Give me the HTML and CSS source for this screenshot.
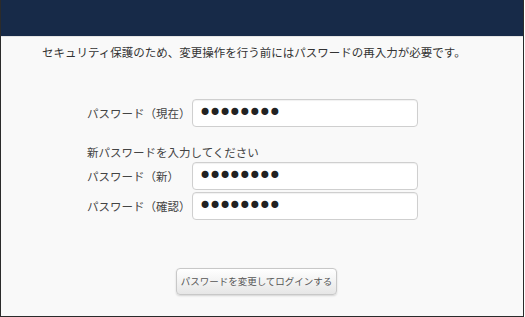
FILE: index.html
```html
<!DOCTYPE html>
<html lang="ja">
<head>
  <meta charset="UTF-8" />
  <title>パスワード変更</title>
  <link rel="stylesheet" href="styles.css">
</head>
<body>

<div class="ventana">
  <div class="cabecera"></div>
  <div class="contenido">
    <p class="aviso">セキュリティ保護のため、変更操作を行う前にはパスワードの再入力が必要です。</p>

    <form class="formulario" onsubmit="return false">
      <div class="fila fila-actual">
        <label for="actual">パスワード（現在）</label>
        <input type="password" id="actual" value="abcdefgh">
      </div>

      <div class="pista">新パスワードを入力してください</div>
      <div class="fila">
        <label for="nueva">パスワード（新）</label>
        <input type="password" id="nueva" value="abcdefgh">
      </div>
      <div class="fila fila-confirmar">
        <label for="confirmar">パスワード（確認）</label>
        <input type="password" id="confirmar" value="abcdefgh">
      </div>

      <div class="acciones">
        <button type="submit">パスワードを変更してログインする</button>
      </div>
    </form>
  </div>
</div>

</body>
</html>
```

FILE: styles.css
```css
* { box-sizing: border-box; }
body {
  margin: 0;
  background: #ffffff;
  font-family: "Noto Sans CJK JP", "Noto Sans", sans-serif;
  color: #333;
}

.ventana {
  width: 524px;
  height: 317px;
  border: 1px solid #2b2b2b;
  border-top: none;
  background: #f9f9f9;
}

.cabecera {
  height: 37px;
  background: #172a48;
  border-bottom: 1px solid #e4e4e4;
}

.contenido {
  padding: 6px 0 0 41px;
}

.aviso {
  margin: 0;
  font-size: 11.5px;
  line-height: 18px;
}

.formulario {
  margin: 38px 0 0 45px;
}

.fila {
  display: flex;
  align-items: center;
}

.fila-confirmar {
  margin-top: 2px;
}

.fila label {
  width: 105px;
  font-size: 11.5px;
  color: #444;
}

.fila input {
  width: 226px;
  height: 28px;
  padding: 0 5px;
  border: 1px solid #cfcfcf;
  border-radius: 4px;
  background: #fff;
  font-family: "DejaVu Sans", sans-serif;
  font-size: 24px;
  letter-spacing: -4.2px;
  color: #222;
  box-shadow: inset 0 1px 1px rgba(0, 0, 0, 0.06);
}

.pista {
  margin: 16px 0 1px;
  font-size: 11.5px;
  line-height: 18px;
  color: #444;
}

.acciones {
  margin: 46px 0 0 89px;
}

.acciones button {
  width: 161px;
  height: 27px;
  padding: 0;
  border: 1px solid #c8c8c8;
  border-radius: 4px;
  background: linear-gradient(#ffffff, #e6e6e6);
  box-shadow: 0 1px 2px rgba(0, 0, 0, 0.15);
  font-family: "Noto Sans CJK JP", sans-serif;
  font-size: 9.5px;
  color: #555;
  cursor: pointer;
}
```
